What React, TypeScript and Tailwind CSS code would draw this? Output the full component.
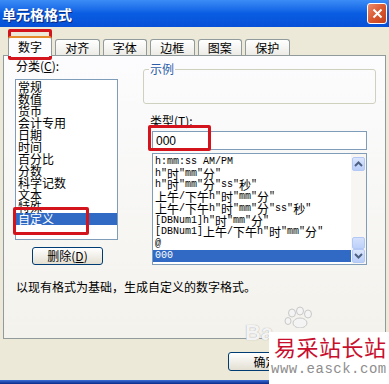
import * as React from "react";

const cjk = "font-['Noto_Sans_CJK_SC','Noto_Sans',sans-serif]";

const categories = [
  "常规",
  "数值",
  "货币",
  "会计专用",
  "日期",
  "时间",
  "百分比",
  "分数",
  "科学记数",
  "文本",
  "特殊",
  "自定义",
];

const formats = [
  "h:mm:ss AM/PM",
  'h"时"mm"分"',
  'h"时"mm"分"ss"秒"',
  '上午/下午h"时"mm"分"',
  '上午/下午h"时"mm"分"ss"秒"',
  '[DBNum1]h"时"mm"分"',
  '[DBNum1]上午/下午h"时"mm"分"',
  "@",
  "000",
];

const tabs = ["对齐", "字体", "边框", "图案", "保护"];

// SimSun style: half width ascii, full width hanzi
function mixed(text: string) {
  return text
    .split(/([\u4e00-\u9fff]+)/)
    .filter((p) => p !== "")
    .map((part, i) =>
      /[\u4e00-\u9fff]/.test(part) ? (
        <span key={i} className={`text-[12px] leading-[12px] ${cjk}`}>
          {part}
        </span>
      ) : (
        <span key={i} className="leading-[12px] whitespace-pre">
          {part}
        </span>
      )
    );
}

function Chevron({ up }: { up?: boolean }) {
  return (
    <svg width="9" height="6" viewBox="0 0 9 6">
      <path
        d={up ? "M1 5 L4.5 1.5 L8 5" : "M1 1 L4.5 4.5 L8 1"}
        fill="none"
        stroke="#4d6185"
        strokeWidth="2"
      />
    </svg>
  );
}

export default function App() {
  return (
    <div
      className={`relative w-[389px] h-[384px] overflow-hidden bg-[#ece9d8] text-[12px] text-black ${cjk}`}
    >
      {/* title bar */}
      <div className="h-[27px] flex items-center justify-between pl-[2px] pr-[2px] bg-gradient-to-b from-[#3b8cf5] via-[#0a5de2] to-[#0650d6]">
        <span className="text-white font-bold text-[14px] leading-[14px] [text-shadow:1px_1px_0_#0a2a80]">
          单元格格式
        </span>
        <div className="w-[20px] h-[21px] rounded-[3px] border border-white bg-gradient-to-br from-[#eb8a6a] via-[#d9582f] to-[#c2401c] flex items-center justify-center">
          <svg width="11" height="11" viewBox="0 0 11 11">
            <path d="M1.5 1.5 L9.5 9.5 M9.5 1.5 L1.5 9.5" stroke="white" strokeWidth="2" />
          </svg>
        </div>
      </div>

      {/* tabs */}
      <div className="h-[28px] flex items-end pl-[8px]">
        <div className="relative z-10 -mb-[1px] w-[44px] h-[20px] border border-b-0 border-[#919b9c] border-t-[#e68b2c] border-t-2 rounded-t-[3px] bg-[#fcfcfe] flex items-center justify-center text-[12px] leading-[12px]">
          数字
        </div>
        <div className="flex gap-[3px] ml-[3px]">
          {tabs.map((t) => (
            <div
              key={t}
              className="w-[44.5px] h-[16px] border border-b-0 border-[#919b9c] rounded-t-[3px] bg-gradient-to-b from-white to-[#ecebe6] flex items-center justify-center text-[12px] leading-[12px]"
            >
              {t}
            </div>
          ))}
        </div>
      </div>

      {/* tab panel */}
      <div className="mx-[3px] h-[284px] border border-[#919b9c] bg-gradient-to-b from-[#fcfcfe] to-[#f3f2ec] pl-[11px] pt-[4px]">
        <div className="flex">
          {/* category column */}
          <div className="w-[103px] flex flex-col">
            <div className="h-[12px] leading-[12px] pl-[1px]">
              分类(<span className="underline">C</span>):
            </div>
            <div className="mt-[7px] h-[161px] border border-[#7f9db9] bg-white pt-[1px]">
              {categories.map((c) => (
                <div
                  key={c}
                  className={`h-[12px] leading-[12px] pl-[2px] ${
                    c === "自定义" ? "bg-[#316ac5] text-white" : ""
                  }`}
                >
                  {c}
                </div>
              ))}
            </div>
            <div className="mt-[7px] ml-[17px] w-[71px] h-[18px] rounded-[3px] border border-[#003c74] bg-gradient-to-b from-white to-[#e3dfd2] flex items-center justify-center leading-[12px]">
              删除(<span className="underline">D</span>)
            </div>
          </div>

          {/* right column */}
          <div className="ml-[25px] w-[233px] flex flex-col">
            <fieldset className="mt-[3px] h-[41px] border border-[#d0d0bf] rounded-[3px] px-[5px]">
              <legend className="px-[1px] text-[12px] leading-[12px] text-[#2a5ca8]">示例</legend>
            </fieldset>
            <div className="mt-[11px] pl-[7px] h-[12px] leading-[12px]">
              类型(<span className="underline">T</span>):
            </div>
            <div className="mt-[4px] ml-[9px] w-[215px] h-[19px] border border-[#7f9db9] bg-white pl-[3px] flex items-center font-['Liberation_Sans',sans-serif] text-[12px]">
              000
            </div>
            <div className="mt-[3px] ml-[9px] w-[215px] h-[112px] border border-[#7f9db9] bg-white flex">
              <div className="flex-1 pt-[2px] overflow-hidden font-['Liberation_Mono','Noto_Sans_CJK_SC',monospace] text-[10px]">
                {formats.map((f) => (
                  <div
                    key={f}
                    className={`h-[11.75px] flex items-center pl-[2px] whitespace-nowrap ${
                      f === "000" ? "bg-[#316ac5] text-white" : ""
                    }`}
                  >
                    {mixed(f)}
                  </div>
                ))}
              </div>
              <div className="w-[15px] bg-[#f7f6f2] flex flex-col p-[1px] pt-[3px]">
                <div className="h-[14px] rounded-[2px] border border-[#b4c8f6] bg-gradient-to-b from-[#dbe6fd] to-[#b9cdf8] flex items-center justify-center">
                  <Chevron up />
                </div>
                <div className="flex-1" />
                <div className="h-[12px] rounded-[2px] border border-[#b4c8f6] bg-gradient-to-b from-[#d5e1fc] to-[#bcd0f9]" />
                <div className="h-[14px] rounded-[2px] border border-[#b4c8f6] bg-gradient-to-b from-[#dbe6fd] to-[#b9cdf8] flex items-center justify-center">
                  <Chevron />
                </div>
              </div>
            </div>
          </div>
        </div>
        <div className="mt-[16px] h-[12px] leading-[12px] pl-[1px]">
          以现有格式为基础，生成自定义的数字格式。
        </div>
      </div>

      {/* dialog buttons */}
      <div className="h-[41px] pl-[228px] pt-[13px]">
        <div className="w-[75px] h-[19px] rounded-[3px] border border-[#003c74] bg-gradient-to-b from-white to-[#e3dfd2] flex items-center justify-center leading-[12px]">
          确定
        </div>
      </div>
      <div className="h-[4px] bg-gradient-to-b from-[#3c6fd8] to-[#0a2a8a]" />

      {/* annotation boxes */}
      <div className="absolute left-[8px] top-[29px] w-[44px] h-[31px] border-[3px] border-[#d3141c] rounded-[2px]" />
      <div className="absolute left-[13px] top-[207px] w-[76px] h-[28px] border-[3px] border-[#d3141c] rounded-[2px]" />
      <div className="absolute left-[148px] top-[125px] w-[63px] h-[26px] border-[3px] border-[#d3141c] rounded-[2px]" />

      {/* baidu watermark */}
      <div className="absolute left-[245px] top-[322px] text-[22px] font-bold leading-[22px] font-['Liberation_Sans',sans-serif] text-[#f3f3f3] [text-shadow:0_0_1px_#9a9a9a]">
        Ba
      </div>
      <svg className="absolute left-[283px] top-[306px]" width="32" height="22" viewBox="0 0 32 22">
        <g fill="#f4f4f4" stroke="#c8c8c8" strokeWidth="1">
          <ellipse cx="9" cy="7" rx="3.5" ry="4" />
          <ellipse cx="17" cy="5" rx="3.5" ry="4" />
          <ellipse cx="25" cy="8" rx="3.5" ry="4" />
          <ellipse cx="5" cy="15" rx="3" ry="3.5" />
          <ellipse cx="17" cy="17" rx="7" ry="5" />
        </g>
      </svg>

      {/* site watermark */}
      <div className="absolute left-[269px] top-[332px] w-[120px] h-[52px] bg-white flex flex-col items-start pl-[5px] pt-[2px]">
        <div className="text-[22px] leading-[24px] tracking-[0.5px] text-[#c8102e]">易采站长站</div>
        <div className="mt-[3px] -ml-[3px] text-[14px] leading-[16px] tracking-[0.5px] text-[#8e8e8e] font-['Liberation_Mono',monospace]">
          www.easck.com
        </div>
      </div>
    </div>
  );
}
